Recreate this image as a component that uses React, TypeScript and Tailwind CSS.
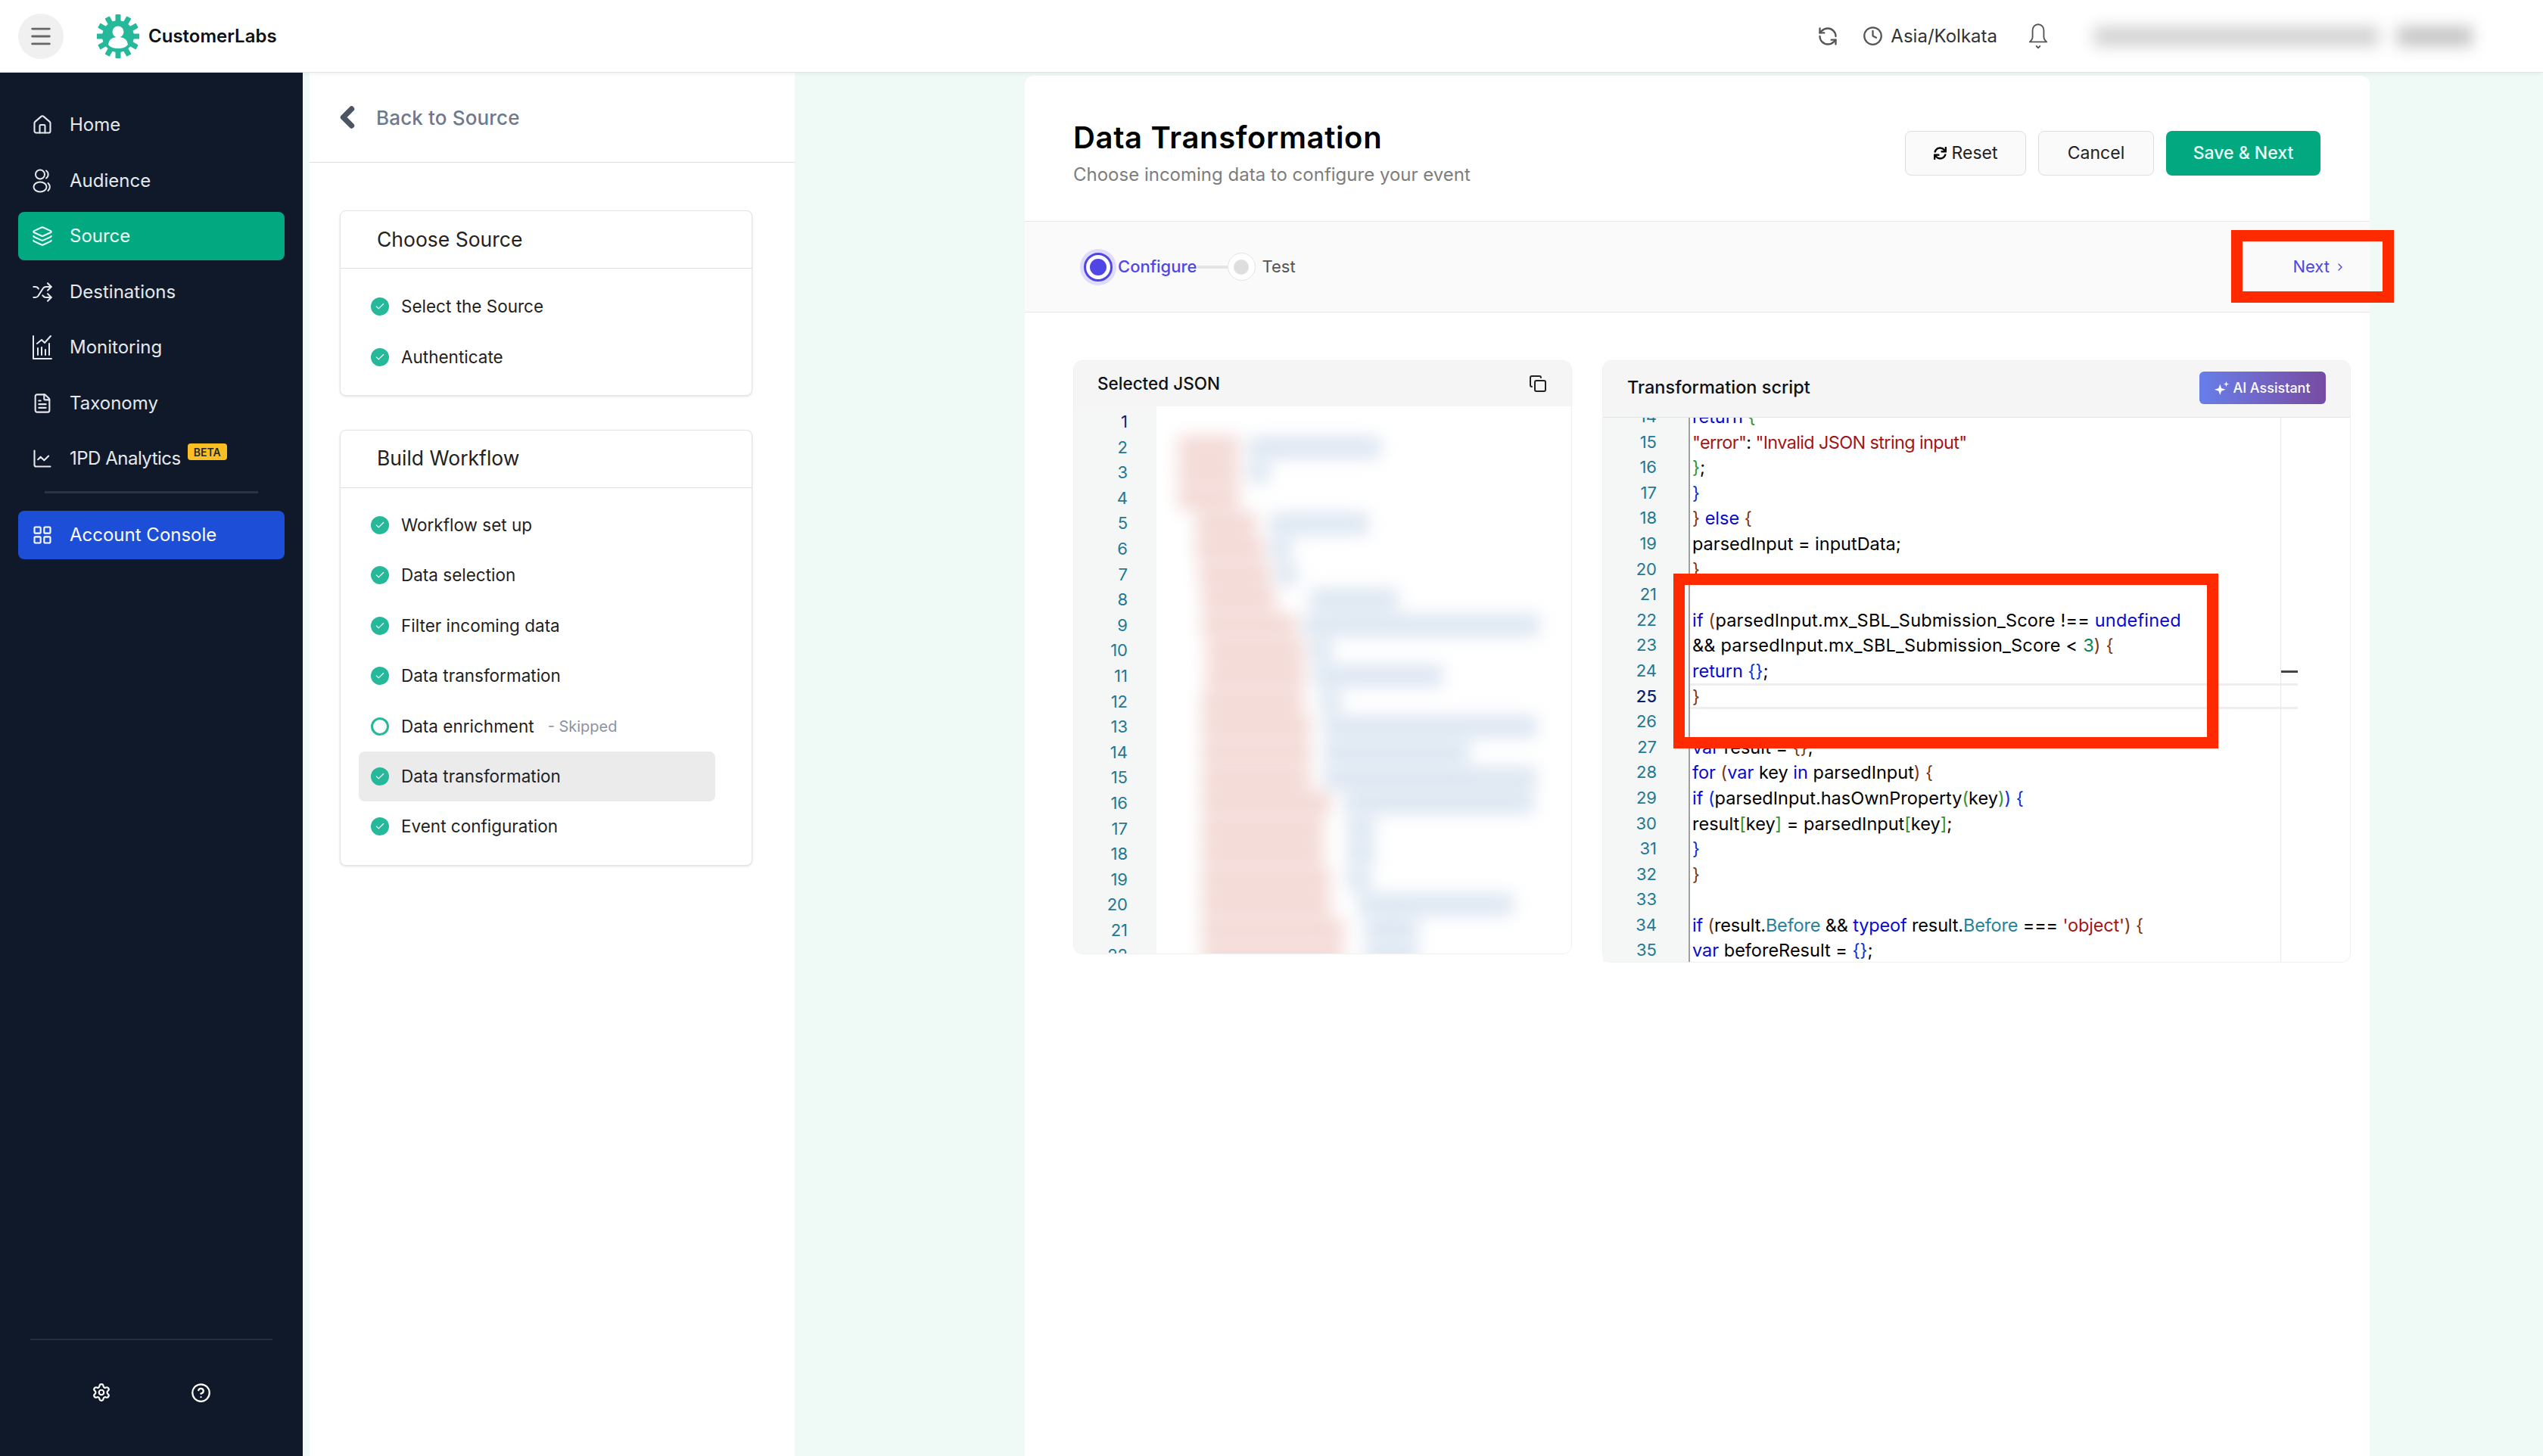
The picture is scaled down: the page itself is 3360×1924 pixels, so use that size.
import { ChevronLeft, CircleHelp, Clock, Copy, FileText, House, Layers, LayoutGrid, ChartLine, RefreshCcw, Settings, Shuffle, Menu, Check, ChevronRight } from 'lucide-react';
import { FaSync } from 'react-icons/fa';

const K = 'text-[#0808d0]';
const S = 'text-[#a31515]';
const N = 'text-[#098658]';
const T = 'text-[#267f99]';
const B1 = 'text-[#0a30d8]';
const B2 = 'text-[#319331]';
const B3 = 'text-[#7b3814]';

type Tok = [string, string?];

const code: Tok[][] = [
    [['return ', K], ['{', B2]],
    [['"error"', S], [': '], ['"Invalid JSON string input"', S]],
    [['}', B2], [';']],
    [['}', B1]],
    [['}', B3], [' '], ['else', K], [' '], ['{', B3]],
    [['parsedInput = inputData;']],
    [['}', B3]],
    [],
    [['if', K], [' '], ['(', B3], ['parsedInput.mx_SBL_Submission_Score !== '], ['undefined', K]],
    [['&& parsedInput.mx_SBL_Submission_Score < '], ['3', N], [')', B3], [' '], ['{', B3]],
    [['return ', K], ['{}', B1], [';']],
    [['}', B3]],
    [],
    [['var ', K], ['result = '], ['{}', B3], [';']],
    [['for', K], [' '], ['(', B3], ['var ', K], ['key '], ['in ', K], ['parsedInput'], [')', B3], [' '], ['{', B3]],
    [['if', K], [' '], ['(', B1], ['parsedInput.hasOwnProperty'], ['(', B2], ['key'], [')', B2], [')', B1], [' '], ['{', B1]],
    [['result'], ['[', B2], ['key'], [']', B2], [' = parsedInput'], ['[', B2], ['key'], [']', B2], [';']],
    [['}', B1]],
    [['}', B3]],
    [],
    [['if', K], [' '], ['(', B3], ['result.'], ['Before', T], [' && '], ['typeof ', K], ['result.'], ['Before', T], [' === '], ["'object'", S], [')', B3], [' '], ['{', B3]],
    [['var ', K], ['beforeResult = '], ['{}', B1], [';']],
];

const rowTracking: Record<number, string> = {
    1: 'tracking-[-0.65px]',
    8: 'tracking-[0.2px]',
    9: 'tracking-[0.2px]',
    20: 'tracking-[-0.15px]',
};

// blurred json rows: indent, key width, gap, value width
const jsonRows = [
    [29, 80, 13, 174], [29, 80, 13, 27], [29, 80, 0, 0], [52, 80, 18, 130], [52, 90, 9, 27], [56, 94, 9, 27],
    [60, 98, 45, 116], [60, 125, 9, 312], [65, 130, 9, 27], [65, 130, 13, 170], [60, 134, 22, 27],
    [60, 143, 18, 281], [60, 143, 18, 192], [60, 143, 18, 281], [60, 170, 18, 250], [60, 161, 31, 36],
    [60, 161, 31, 36], [60, 170, 22, 31], [60, 170, 36, 205], [60, 188, 27, 71], [60, 188, 27, 71],
];

function AudienceIcon() {
    return (
        <svg viewBox="0 0 26 34" className="w-[26px] h-[34px]" fill="none" stroke="currentColor" strokeWidth="2" strokeLinecap="round">
            <circle cx="10" cy="8.5" r="6" />
            <ellipse cx="10" cy="25" rx="8.5" ry="6.5" />
            <path d="M18 3.5a6 6 0 0 1 0 10" />
            <path d="M20.5 20a6.5 6.5 0 0 1 0 10" />
        </svg>
    );
}

function MonitoringIcon() {
    return (
        <svg viewBox="0 0 28 34" className="w-[28px] h-[34px]" fill="none" stroke="currentColor" strokeWidth="2" strokeLinecap="round" strokeLinejoin="round">
            <path d="M2 2v30h24" />
            <path d="M8 27v-9M13 27V17M18 27v-7M23 27V12" />
            <path d="M7 12l6-5 4 4 8-9" />
        </svg>
    );
}

function BellIcon() {
    return (
        <svg viewBox="0 0 28 38" className="w-[26px] h-[36px] text-[#555]" fill="none" stroke="currentColor" strokeWidth="2" strokeLinecap="round" strokeLinejoin="round">
            <path d="M14 2c-5 0-8 4-8 9v9c0 3-2 5-4 7h24c-2-2-4-4-4-7v-9c0-5-3-9-8-9z" />
            <path d="M11.5 33l2.5 2.5 2.5-2.5" />
        </svg>
    );
}

function SparkIcon() {
    return (
        <svg viewBox="0 0 22 22" className="w-[20px] h-[20px]" fill="currentColor">
            <path d="M8 5l2 6 6 2-6 2-2 6-2-6-6-2 6-2z" />
            <path d="M17 1l1 3 3 1-3 1-1 3-1-3-3-1 3-1z" />
        </svg>
    );
}

function Logo() {
    const teeth = Array.from({ length: 12 }, (_, i) => i * 30);
    return (
        <svg viewBox="0 0 56 60" className="w-[56px] h-[60px]">
            {teeth.map((a) => (
                <rect key={a} x="24.5" y="1" width="7" height="12" rx="1" fill="#26b89a" transform={`rotate(${a} 28 30)`} />
            ))}
            <circle cx="28" cy="30" r="21" fill="#26b89a" />
            <circle cx="28" cy="24" r="7.5" fill="#fff" />
            <path d="M15 41c1-8 7-10 13-10s12 2 13 10c-3 4-8 5-13 5s-10-1-13-5z" fill="#fff" />
        </svg>
    );
}

function NavItem({ icon, label, active, beta }: { icon: React.ReactNode; label: string; active?: boolean; beta?: boolean }) {
    return (
        <div className={`mx-6 h-[64px] mb-[9.5px] pl-[18px] flex items-center gap-[22px] rounded-lg text-[#e6e8eb] text-[24px] ${active ? 'bg-[#02a87f] text-[#eafff8]' : ''}`}>
            <span className="w-[28px] flex justify-center">{icon}</span>
            <span className={beta ? 'tracking-[-0.5px]' : ''}>{label}</span>
            {beta && <span className="ml-[-13px] mb-[18px] bg-[#fbbf24] text-[#1f2937] rounded-[4px] w-[52px] h-[22px] flex items-center justify-center text-[14px] font-semibold">BETA</span>}
        </div>
    );
}

function Step({ label, skipped, selected, todo }: { label: string; skipped?: boolean; selected?: boolean; todo?: boolean }) {
    return (
        <div className={`ml-[24px] mr-[48px] h-[66.4px] pl-[16px] flex items-center gap-[16px] rounded-lg text-[22.5px] text-[#1f1f1f] ${selected ? 'bg-[#ebebeb]' : ''}`}>
            {todo ? (
                <span className="w-[24px] h-[24px] rounded-full border-[3px] border-[#26b89a]" />
            ) : (
                <span className="w-[24px] h-[24px] rounded-full bg-[#26b89a] flex items-center justify-center">
                    <Check className="w-[14px] h-[14px] text-white" strokeWidth={2} />
                </span>
            )}
            <span>{label}</span>
            {skipped && <span className="text-[20px] text-[#8a93a3] ml-[2px]">- Skipped</span>}
        </div>
    );
}

function StepCard({ title, children }: { title: string; children: React.ReactNode }) {
    return (
        <div className="ml-[40px] w-[545px] bg-white border border-[#e4e4e4] rounded-[8px] shadow-[0_1px_3px_rgba(0,0,0,0.12)]">
            <div className="h-[76px] pl-[48px] flex items-center border-b border-[#dedede] text-[26.5px] text-[#222]">{title}</div>
            {children}
        </div>
    );
}

export default function App() {
    return (
        <div className="w-[3360px] h-[1924px] overflow-hidden flex flex-col bg-[#effaf7] font-['Inter',sans-serif] text-[#111]">
            {/* Top bar */}
            <header className="relative z-10 h-[96px] shrink-0 bg-white border-b border-[#e5e5e5] shadow-[0_2px_6px_rgba(0,0,0,0.05)] flex items-center">
                <div className="ml-[24px] w-[60px] h-[60px] rounded-full bg-[#f0f0f0] flex items-center justify-center">
                    <Menu className="w-[34px] h-[34px] text-[#666]" strokeWidth={2} />
                </div>
                <div className="ml-[44px]"><Logo /></div>
                <span className="ml-[12px] text-[24px] font-semibold text-[#111]">CustomerLabs</span>
                <div className="ml-auto flex items-center text-[#444]">
                    <RefreshCcw className="w-[28px] h-[28px] text-[#555]" strokeWidth={2} />
                    <Clock className="ml-[32px] w-[27px] h-[27px] text-[#555]" strokeWidth={2} />
                    <span className="ml-[10px] text-[24px] text-[#333]">Asia/Kolkata</span>
                    <span className="ml-[41px]"><BellIcon /></span>
                    <div className="ml-[61px] mr-[93px] w-[500px] h-[26px] flex gap-[24px] blur-[10px]">
                        <span className="flex-1 bg-[#d2d2d2]" />
                        <span className="w-[100px] bg-[#c4c4c4]" />
                    </div>
                </div>
            </header>

            <div className="flex flex-1 min-h-0">
                {/* Sidebar */}
                <aside className="w-[400px] shrink-0 bg-[#0f1929] flex flex-col pt-[37px]">
                    <NavItem icon={<House className="w-[28px] h-[28px]" strokeWidth={1.8} />} label="Home" />
                    <NavItem icon={<AudienceIcon />} label="Audience" />
                    <NavItem active icon={<Layers className="w-[30px] h-[30px]" strokeWidth={1.8} />} label="Source" />
                    <NavItem icon={<Shuffle className="w-[30px] h-[30px]" strokeWidth={1.8} />} label="Destinations" />
                    <NavItem icon={<MonitoringIcon />} label="Monitoring" />
                    <NavItem icon={<FileText className="w-[28px] h-[28px]" strokeWidth={1.8} />} label="Taxonomy" />
                    <NavItem beta icon={<ChartLine className="w-[30px] h-[30px]" strokeWidth={1.8} />} label="1PD Analytics" />
                    <div className="mx-[59px] mt-[1px] mb-[23px] h-[3px] bg-[#2a3341]" />
                    <div className="mx-6 h-[64px] pl-[18px] flex items-center gap-[22px] rounded-lg bg-[#1d4ed8] text-white text-[24px]">
                        <span className="w-[28px] flex justify-center"><LayoutGrid className="w-[28px] h-[28px]" strokeWidth={1.8} /></span>
                        <span>Account Console</span>
                    </div>
                    <div className="mt-auto mx-[40px] border-t-2 border-[#262f3d] h-[155px] flex items-start justify-between px-[81px] pt-[56px]">
                        <Settings className="w-[26px] h-[26px] text-white" strokeWidth={2} />
                        <CircleHelp className="w-[27px] h-[27px] text-white" strokeWidth={2} />
                    </div>
                </aside>

                {/* Workflow steps */}
                <section className="ml-[9px] w-[641px] shrink-0 bg-white flex flex-col">
                    <div className="h-[119px] shrink-0 border-b border-[#dcdfe3] flex items-center pl-[28px]">
                        <ChevronLeft className="w-[44px] h-[44px] text-[#4b5563]" strokeWidth={4} />
                        <span className="ml-[16px] text-[26px] tracking-[0.15px] text-[#6b7a8d] font-medium">Back to Source</span>
                    </div>
                    <div className="pt-[63px] flex flex-col gap-[45px]">
                        <StepCard title="Choose Source">
                            <div className="pt-[17px] pb-[17px]">
                                <Step label="Select the Source" />
                                <Step label="Authenticate" />
                            </div>
                        </StepCard>
                        <StepCard title="Build Workflow">
                            <div className="pt-[16px] pb-[17px]">
                                <Step label="Workflow set up" />
                                <Step label="Data selection" />
                                <Step label="Filter incoming data" />
                                <Step label="Data transformation" />
                                <Step todo skipped label="Data enrichment" />
                                <Step selected label="Data transformation" />
                                <Step label="Event configuration" />
                            </div>
                        </StepCard>
                    </div>
                </section>

                {/* Main card */}
                <main className="ml-[304px] mt-[4px] w-[1777px] shrink-0 bg-white rounded-t-[12px] flex flex-col">
                    <div className="h-[192px] shrink-0 pl-[64px] pr-[65px] flex items-start justify-between">
                        <div className="pt-[56px]">
                            <h1 className="text-[40px] leading-[52px] font-semibold tracking-[0.65px] text-black">Data Transformation</h1>
                            <p className="mt-[7px] text-[24px] leading-[32px] text-[#7d7d7d]">Choose incoming data to configure your event</p>
                        </div>
                        <div className="pt-[73px] flex gap-[16px] text-[23px]">
                            <button className="h-[59px] w-[160px] rounded-[8px] border border-[#dedede] bg-[#fafafa] flex items-center justify-center gap-[7px] text-[#222]">
                                <FaSync className="w-[17px] h-[17px] text-black" /> Reset
                            </button>
                            <button className="h-[59px] w-[153px] rounded-[8px] border border-[#dedede] bg-[#fafafa] text-[#222]">Cancel</button>
                            <button className="h-[59px] w-[204px] rounded-[8px] bg-[#02a87f] text-[#ecfff9] font-medium">Save &amp; Next</button>
                        </div>
                    </div>

                    {/* Stepper */}
                    <div className="relative h-[121px] shrink-0 bg-[#fafafa] border-y border-[#e8e8e8] pl-[73px] flex items-center">
                        <span className="w-[48px] h-[48px] rounded-full bg-[#dfdcfb] flex items-center justify-center">
                            <span className="w-[38px] h-[38px] rounded-full bg-white border-[3px] border-[#4f46e5] flex items-center justify-center">
                                <span className="w-[22px] h-[22px] rounded-full bg-[#4f46e5]" />
                            </span>
                        </span>
                        <span className="ml-[2px] text-[22px] font-medium text-[#4f46e5]">Configure</span>
                        <span className="w-[40px] h-[4px] bg-[#e5e5e5]" />
                        <span className="w-[37px] h-[37px] rounded-full bg-white border border-[#e3e3e3] flex items-center justify-center">
                            <span className="w-[20px] h-[20px] rounded-full bg-[#dedede]" />
                        </span>
                        <span className="ml-[9px] text-[22px] text-[#555]">Test</span>
                        <span className="ml-auto mr-[31px] flex items-center gap-[6px] text-[22px] text-[#4f46e5]">Next <ChevronRight className="w-[16px] h-[16px]" strokeWidth={2} /></span>
                        <div className="absolute left-[1594px] top-[11px] w-[215px] h-[96px] border-[15px] border-[#ff2a00]" />
                    </div>

                    {/* Editors */}
                    <div className="pt-[63px] pl-[64px] flex items-start gap-[40px]">
                        {/* Selected JSON */}
                        <div className="w-[659px] h-[785px] rounded-[12px] border border-[#f0f0f0] overflow-hidden flex flex-col">
                            <div className="h-[60px] shrink-0 bg-[#f5f5f5] flex items-center justify-between pl-[31px] pr-[32px]">
                                <span className="text-[22.5px] font-medium text-[#111]">Selected JSON</span>
                                <Copy className="w-[24px] h-[24px] text-[#222]" strokeWidth={2} />
                            </div>
                            <div className="flex flex-1 min-h-0 overflow-hidden">
                                <div className="w-[109px] shrink-0 bg-[#f5f6f6] pt-[4px] text-right pr-[38px] text-[22px] leading-[33.6px] text-[#237893]">
                                    {Array.from({ length: 22 }, (_, i) => (
                                        <div key={i} className={i === 0 ? 'text-[#0b216f]' : ''}>{i + 1}</div>
                                    ))}
                                </div>
                                <div className="flex-1 blur-[11px] pt-[37px]">
                                    {jsonRows.map(([indent, key, gap, val], i) => (
                                        <div key={i} className="h-[33.6px] flex items-center" style={{ paddingLeft: indent }}>
                                            <span className="h-[30px] bg-[#f3d9d5]" style={{ width: key }} />
                                            <span className="h-[28px] bg-[#dbe5f1]" style={{ width: val, marginLeft: gap }} />
                                        </div>
                                    ))}
                                </div>
                            </div>
                        </div>

                        {/* Transformation script */}
                        <div className="relative w-[989px] h-[796px] rounded-[12px] border border-[#f0f0f0] flex flex-col">
                            <div className="relative z-10 h-[75px] shrink-0 bg-[#f5f5f5] rounded-t-[12px] border-b border-[#e4e4e4] flex items-center justify-between pl-[32px] pr-[32px]">
                                <span className="text-[23.5px] font-medium text-[#111] -mt-[4px]">Transformation script</span>
                                <span className="w-[167px] h-[43px] rounded-[6px] bg-gradient-to-r from-[#667eea] to-[#764ba2] text-white text-[18px] font-medium flex items-center justify-center gap-[4px] -mt-[3px]">
                                    <SparkIcon /> AI Assistant
                                </span>
                            </div>
                            <div className="relative flex-1 min-h-0 overflow-hidden">
                                <div className="flex mt-[-18px]">
                                    <div className="w-[113px] shrink-0 text-right pr-[42px] text-[22px] leading-[33.6px] text-[#237893] bg-[#f5f6f6]">
                                        {code.map((_, i) => (
                                            <div key={i} className={i === 11 ? 'text-[#0b216f] font-medium' : ''}>{i + 14}</div>
                                        ))}
                                    </div>
                                    <div className="flex-1 border-l-2 border-[#a0a0a0] pl-[3px] text-[23.5px] leading-[33.6px] text-black whitespace-pre">
                                        {code.map((row, i) => (
                                            <div key={i} className={`h-[33.6px] ${rowTracking[i] ?? ''}`}>
                                                {row.map(([text, color], j) => <span key={j} className={color}>{text}</span>)}
                                            </div>
                                        ))}
                                    </div>
                                </div>
                                {/* current line highlight and ruler */}
                                <div className="absolute left-[115px] top-[351px] w-[803px] h-[34px] border-y-[3px] border-[#eeeeee]" />
                                <div className="absolute left-[895px] top-0 bottom-0 w-px bg-[#e8e8e8]" />
                                <div className="absolute left-[896px] top-[334px] w-[22px] h-[3px] bg-[#444]" />
                            </div>
                            <div className="absolute z-20 left-[93px] top-[281px] w-[720px] h-[231px] border-[15px] border-[#ff2a00]" />
                        </div>
                    </div>
                </main>
            </div>
        </div>
    );
}
